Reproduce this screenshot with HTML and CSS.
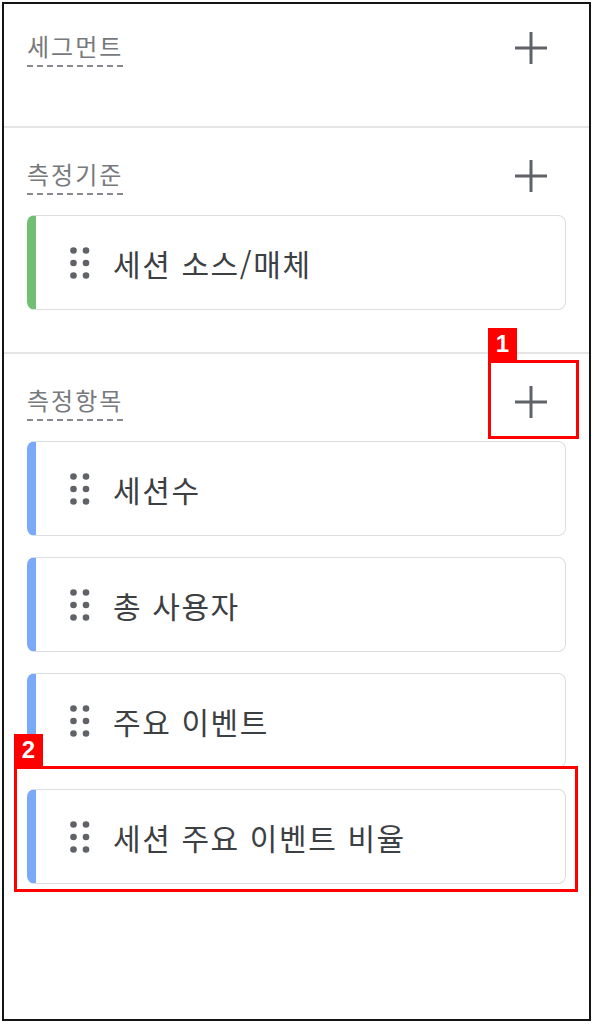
FILE: index.html
```html
<!DOCTYPE html>
<html lang="ko">
<head>
    <meta charset="UTF-8">
    <meta name="viewport" content="width=device-width, initial-scale=1.0">
    <title>탐색 변수</title>
    <link rel="stylesheet" href="styles.css">
</head>
<body>
    <div class="panel">
        <!-- 세그먼트 -->
        <section class="section section-first">
            <div class="section-head">
                <span class="section-title">세그먼트</span>
                <button class="add-btn" aria-label="세그먼트 추가">
                    <svg width="32" height="32" viewBox="0 0 32 32"><path d="M16 0V32M0 16H32"/></svg>
                </button>
            </div>
        </section>

        <!-- 측정기준 -->
        <section class="section">
            <div class="section-head">
                <span class="section-title">측정기준</span>
                <button class="add-btn" aria-label="측정기준 추가">
                    <svg width="32" height="32" viewBox="0 0 32 32"><path d="M16 0V32M0 16H32"/></svg>
                </button>
            </div>
            <div class="chip-list">
                <div class="chip chip-dimension">
                    <svg class="handle" width="20" height="32" viewBox="0 0 20 32"><circle cx="3.5" cy="3.5" r="3.3"/><circle cx="16" cy="3.5" r="3.3"/><circle cx="3.5" cy="16" r="3.3"/><circle cx="16" cy="16" r="3.3"/><circle cx="3.5" cy="28.5" r="3.3"/><circle cx="16" cy="28.5" r="3.3"/></svg>
                    <span class="chip-name">세션 소스/매체</span>
                </div>
            </div>
        </section>

        <!-- 측정항목 -->
        <section class="section section-last">
            <div class="section-head">
                <span class="section-title">측정항목</span>
                <button class="add-btn" aria-label="측정항목 추가">
                    <svg width="32" height="32" viewBox="0 0 32 32"><path d="M16 0V32M0 16H32"/></svg>
                    <span class="annot annot-add"><span class="annot-label">1</span></span>
                </button>
            </div>
            <div class="chip-list">
                <div class="chip chip-metric">
                    <svg class="handle" width="20" height="32" viewBox="0 0 20 32"><circle cx="3.5" cy="3.5" r="3.3"/><circle cx="16" cy="3.5" r="3.3"/><circle cx="3.5" cy="16" r="3.3"/><circle cx="16" cy="16" r="3.3"/><circle cx="3.5" cy="28.5" r="3.3"/><circle cx="16" cy="28.5" r="3.3"/></svg>
                    <span class="chip-name">세션수</span>
                </div>
                <div class="chip chip-metric">
                    <svg class="handle" width="20" height="32" viewBox="0 0 20 32"><circle cx="3.5" cy="3.5" r="3.3"/><circle cx="16" cy="3.5" r="3.3"/><circle cx="3.5" cy="16" r="3.3"/><circle cx="16" cy="16" r="3.3"/><circle cx="3.5" cy="28.5" r="3.3"/><circle cx="16" cy="28.5" r="3.3"/></svg>
                    <span class="chip-name">총 사용자</span>
                </div>
                <div class="chip chip-metric">
                    <svg class="handle" width="20" height="32" viewBox="0 0 20 32"><circle cx="3.5" cy="3.5" r="3.3"/><circle cx="16" cy="3.5" r="3.3"/><circle cx="3.5" cy="16" r="3.3"/><circle cx="16" cy="16" r="3.3"/><circle cx="3.5" cy="28.5" r="3.3"/><circle cx="16" cy="28.5" r="3.3"/></svg>
                    <span class="chip-name">주요 이벤트</span>
                </div>
                <div class="chip chip-metric chip-marked">
                    <svg class="handle" width="20" height="32" viewBox="0 0 20 32"><circle cx="3.5" cy="3.5" r="3.3"/><circle cx="16" cy="3.5" r="3.3"/><circle cx="3.5" cy="16" r="3.3"/><circle cx="16" cy="16" r="3.3"/><circle cx="3.5" cy="28.5" r="3.3"/><circle cx="16" cy="28.5" r="3.3"/></svg>
                    <span class="chip-name">세션 주요 이벤트 비율</span>
                    <span class="annot annot-chip"><span class="annot-label">2</span></span>
                </div>
            </div>
        </section>
    </div>
</body>
</html>
```

FILE: styles.css
```css
body {
    margin: 0;
    background-color: #fff;
    font-family: "Noto Sans CJK KR", "Noto Sans", sans-serif;
}
.panel {
    box-sizing: border-box;
    width: 589px;
    height: 1019px;
    margin: 2px 0 0 2px;
    border: 2px solid #151515;
    background-color: #fff;
}
.section {
    padding: 24px 23px 42px;
    border-bottom: 2px solid #e4e5e7;
}
.section-first {
    padding-top: 20px;
    padding-bottom: 54px;
}
.section-last {
    border-bottom: none;
}
.section-head {
    display: flex;
    justify-content: space-between;
    align-items: center;
    height: 48px;
}
.section-title {
    font-size: 24px;
    line-height: 32px;
    letter-spacing: 2px;
    color: #77797c;
    padding: 0 1px 5px 0;
    background: repeating-linear-gradient(to right, #85888c 0 6px, transparent 6px 10px) left bottom / 100% 2px no-repeat;
}
.add-btn {
    position: relative;
    display: flex;
    align-items: center;
    justify-content: center;
    width: 48px;
    height: 48px;
    margin-right: 11px;
    padding: 0;
    border: none;
    background: none;
    cursor: pointer;
}
.add-btn svg path {
    stroke: #5f6368;
    stroke-width: 3;
    fill: none;
}
.chip-list {
    display: flex;
    flex-direction: column;
    gap: 21px;
    margin-top: 15px;
}
.chip {
    position: relative;
    box-sizing: border-box;
    display: flex;
    align-items: center;
    gap: 23px;
    height: 95px;
    padding-left: 34px;
    border: 1.5px solid #dcdde0;
    border-left: 9px solid #7aa9f7;
    border-radius: 8px;
    background-color: #fff;
}
.chip-dimension {
    border-left-color: #70bf74;
}
.handle {
    flex-shrink: 0;
    fill: #5f6368;
}
.chip-name {
    font-size: 30px;
    letter-spacing: 1.6px;
    color: #3c4043;
    white-space: nowrap;
}

/* red call-outs drawn over the screenshot */
.annot {
    position: absolute;
    z-index: 2;
    box-sizing: border-box;
    border: 3px solid #ff0000;
    pointer-events: none;
}
.annot-add {
    top: -18px;
    left: -19px;
    right: -24px;
    bottom: -13px;
}
.annot-chip {
    top: -24px;
    left: -22px;
    right: -13px;
    bottom: -9px;
}
.annot-label {
    position: absolute;
    left: -3px;
    bottom: calc(100% + 3px);
    width: 29px;
    height: 32px;
    background-color: #ff0000;
    color: #fff;
    font-family: "Liberation Sans", Arial, sans-serif;
    font-weight: bold;
    font-size: 24px;
    line-height: 32px;
    text-align: center;
}
```
